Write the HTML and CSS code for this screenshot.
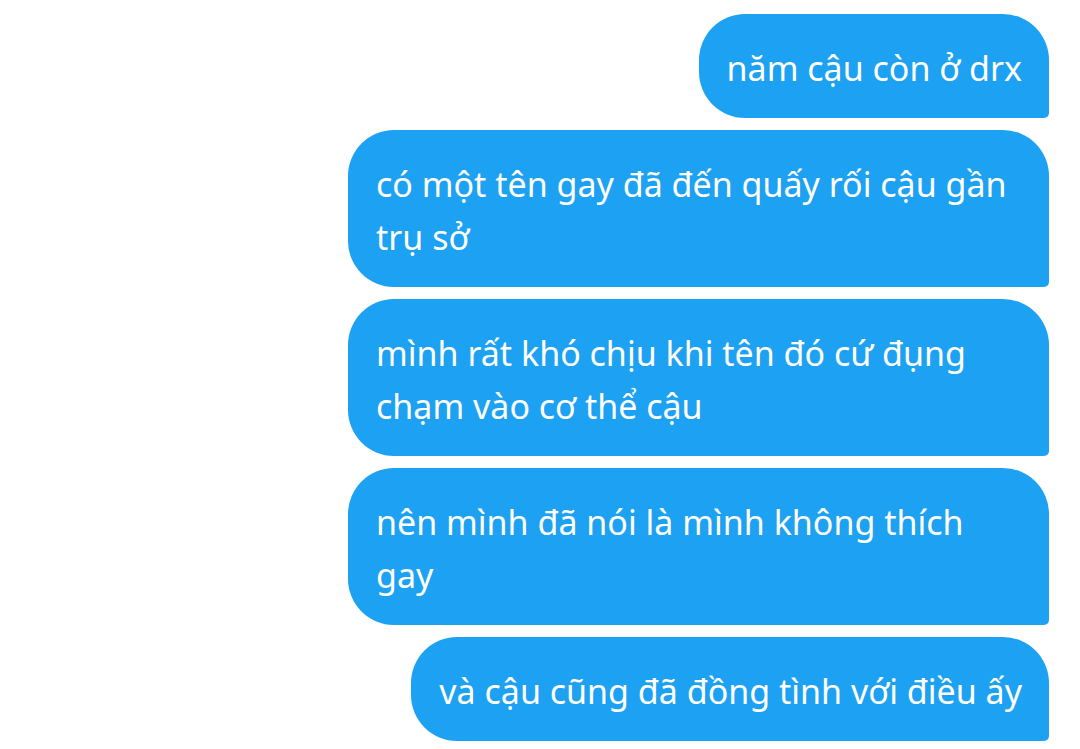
FILE: index.html
```html
<!DOCTYPE html>
<html lang="vi">
<head>
<meta charset="utf-8">
<link rel="stylesheet" href="styles.css">
</head>
<body>
<main class="thread">
  <div class="bubble">năm cậu còn ở drx</div>
  <div class="bubble">có một tên gay đã đến quấy rối cậu gần trụ sở</div>
  <div class="bubble">mình rất khó chịu khi tên đó cứ đụng chạm vào cơ thể cậu</div>
  <div class="bubble">nên mình đã nói là mình không thích gay</div>
  <div class="bubble">và cậu cũng đã đồng tình với điều ấy</div>
</main>
</body>
</html>
```
FILE: styles.css
```css
html, body {
  margin: 0;
  background: #ffffff;
}
.thread {
  display: flex;
  flex-direction: column;
  align-items: flex-end;
  gap: 12px;
  padding: 14px 31px 0 0;
}
.bubble {
  box-sizing: border-box;
  max-width: 701px;
  background: #1da1f2;
  color: #ffffff;
  font-family: "Noto Sans", sans-serif;
  font-size: 34px;
  line-height: 53px;
  padding: 28px 27px 23px 28px;
  border-radius: 46px 46px 5px 46px;
}
```
